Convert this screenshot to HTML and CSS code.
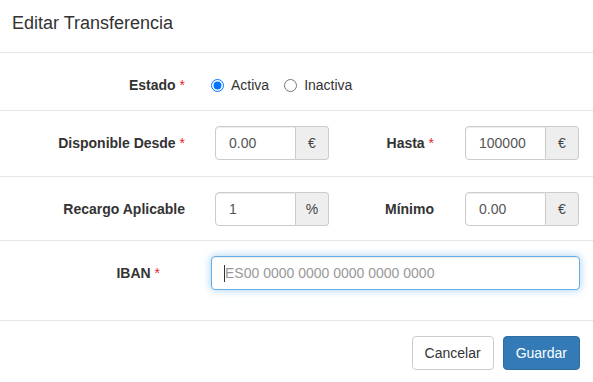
FILE: index.html
```html
<!DOCTYPE html>
<html lang="es">

<head>
    <meta charset="UTF-8">
    <title>Editar Transferencia</title>
    <link rel="stylesheet" href="styles.css">
</head>

<body>
    <div class="modal">
        <div class="modal_header">
            <h4 class="modal_title">Editar Transferencia</h4>
        </div>

        <form class="modal_body">
            <div class="form_row row_estado">
                <label class="lbl lbl_main">Estado <span class="req">*</span></label>
                <div class="radios">
                    <label class="radio_opt"><input type="radio" name="estado" checked> Activa</label>
                    <label class="radio_opt"><input type="radio" name="estado"> Inactiva</label>
                </div>
            </div>

            <div class="form_row row_desde">
                <label class="lbl lbl_main" for="desde">Disponible Desde <span class="req">*</span></label>
                <div class="input_group">
                    <input type="text" id="desde" class="form_control" value="0.00">
                    <span class="addon">€</span>
                </div>
                <label class="lbl lbl_second" for="hasta">Hasta <span class="req">*</span></label>
                <div class="input_group">
                    <input type="text" id="hasta" class="form_control" value="100000">
                    <span class="addon">€</span>
                </div>
            </div>

            <div class="form_row row_recargo">
                <label class="lbl lbl_main" for="recargo">Recargo Aplicable</label>
                <div class="input_group">
                    <input type="text" id="recargo" class="form_control" value="1">
                    <span class="addon">%</span>
                </div>
                <label class="lbl lbl_second" for="minimo">Mínimo</label>
                <div class="input_group">
                    <input type="text" id="minimo" class="form_control" value="0.00">
                    <span class="addon">€</span>
                </div>
            </div>

            <div class="form_row row_iban">
                <label class="lbl lbl_iban" for="iban">IBAN <span class="req">*</span></label>
                <div class="iban_wrap">
                    <span class="caret"></span>
                    <input type="text" id="iban" class="form_control iban_input" placeholder="ES00 0000 0000 0000 0000 0000">
                </div>
            </div>
        </form>

        <div class="modal_footer">
            <button type="button" class="btn btn_default">Cancelar</button>
            <button type="button" class="btn btn_primary">Guardar</button>
        </div>
    </div>
</body>

</html>
```

FILE: styles.css
```css
* {
    box-sizing: border-box;
}

body {
    margin: 0;
    background-color: white;
    font-family: "Liberation Sans", Arial, Helvetica, sans-serif;
    font-size: 14px;
    color: #333333;
}

.modal {
    width: 593px;
}

.modal_header {
    padding: 11px 12px 16px;
    border-bottom: 1px solid #e5e5e5;
}

.modal_title {
    margin: 0;
    font-size: 18px;
    font-weight: normal;
    line-height: 25px;
}

.modal_body {
    margin: 0;
}

.form_row {
    display: flex;
    align-items: center;
    border-bottom: 1px solid #e5e5e5;
}

.row_estado {
    padding: 15px 0 8px;
}

.row_desde {
    padding: 15px 0 16px;
}

.row_recargo {
    padding: 15px 0 14px;
}

.row_iban {
    padding: 15px 0 30px;
}

.lbl {
    font-weight: bold;
    text-align: right;
    line-height: 20px;
}

.lbl_main {
    width: 185px;
    margin-right: 30px;
}

.row_estado .lbl_main {
    margin-right: 26px;
}

.lbl_second {
    width: 105px;
    margin-right: 31px;
}

.lbl_iban {
    width: 160px;
    margin-right: 51px;
}

.req {
    color: #e0282e;
    font-weight: normal;
}

.radios {
    display: flex;
    align-items: center;
    height: 34px;
}

.radio_opt {
    display: flex;
    align-items: center;
    margin-right: 15px;
    line-height: 20px;
}

.radio_opt input {
    width: 13px;
    height: 13px;
    margin: 0 7px 0 0;
}

.input_group {
    display: flex;
    width: 114px;
    height: 34px;
}

.form_control {
    height: 34px;
    padding: 6px 12px 6px 13px;
    border: 1px solid #cccccc;
    border-radius: 4px;
    font-family: inherit;
    font-size: 14px;
    color: #555555;
    background-color: white;
    box-shadow: inset 0 1px 1px rgba(0, 0, 0, 0.075);
    outline: none;
}

.input_group .form_control {
    width: 81px;
    border-radius: 4px 0 0 4px;
}

.addon {
    width: 33px;
    display: flex;
    align-items: center;
    justify-content: center;
    background-color: #eeeeee;
    border: 1px solid #cccccc;
    border-left: 0;
    border-radius: 0 4px 4px 0;
    color: #444444;
}

.iban_wrap {
    position: relative;
    width: 369px;
}

.iban_input {
    width: 369px;
    border-color: #66afe9;
    box-shadow: inset 0 1px 1px rgba(0, 0, 0, 0.075), 0 0 8px rgba(102, 175, 233, 0.6);
}

.iban_input::placeholder {
    color: #999999;
}

.caret {
    position: absolute;
    left: 13px;
    top: 9px;
    width: 1px;
    height: 17px;
    background-color: #333333;
}

.modal_footer {
    display: flex;
    justify-content: flex-end;
    gap: 9px;
    padding: 15px 13px 15px;
}

.btn {
    height: 34px;
    padding: 6px 12px;
    border-radius: 4px;
    font-family: inherit;
    font-size: 14px;
    line-height: 20px;
}

.btn_default {
    background-color: white;
    border: 1px solid #cccccc;
    color: #333333;
}

.btn_primary {
    background-color: #337ab7;
    border: 1px solid #2e6da4;
    color: white;
}
```
